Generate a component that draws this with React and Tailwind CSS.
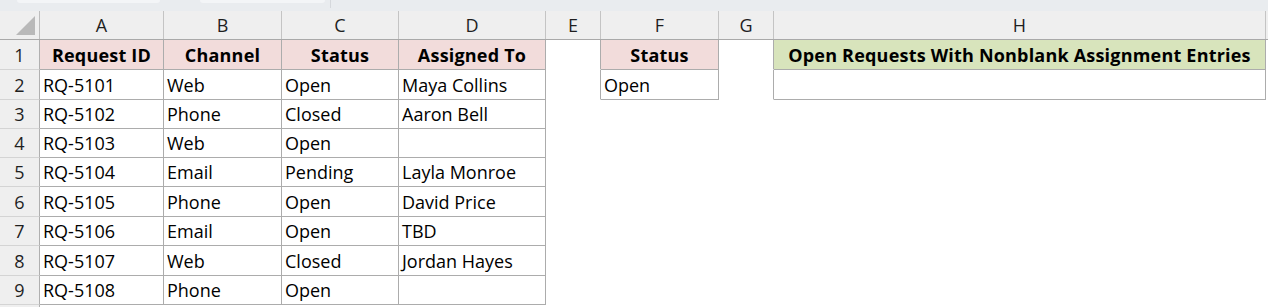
import React from "react";

const COLS = [
  { key: "A", w: "w-[124px]" },
  { key: "B", w: "w-[118px]" },
  { key: "C", w: "w-[117px]" },
  { key: "D", w: "w-[147px]" },
  { key: "E", w: "w-[55px]" },
  { key: "F", w: "w-[118px]" },
  { key: "G", w: "w-[55px]" },
  { key: "H", w: "w-[492px]" },
];

const ROW_H = ["h-[30px]", "h-[30px]", "h-[29px]", "h-[29px]", "h-[29px]", "h-[30px]", "h-[29px]", "h-[30px]", "h-[29px]"];

const DATA = [
  ["Request ID", "Channel", "Status", "Assigned To", "", "Status", "", "Open Requests With Nonblank Assignment Entries"],
  ["RQ-5101", "Web", "Open", "Maya Collins", "", "Open", "", ""],
  ["RQ-5102", "Phone", "Closed", "Aaron Bell", "", "", "", ""],
  ["RQ-5103", "Web", "Open", "", "", "", "", ""],
  ["RQ-5104", "Email", "Pending", "Layla Monroe", "", "", "", ""],
  ["RQ-5105", "Phone", "Open", "David Price", "", "", "", ""],
  ["RQ-5106", "Email", "Open", "TBD", "", "", "", ""],
  ["RQ-5107", "Web", "Closed", "Jordan Hayes", "", "", "", ""],
  ["RQ-5108", "Phone", "Open", "", "", "", "", ""],
];

function boxed(r, c) {
  if (r < 0 || r > 8 || c < 0 || c > 7) return false;
  if (c <= 3) return true;
  if ((c === 5 || c === 7) && r <= 1) return true;
  return false;
}

function Cell({ r, c }) {
  const col = COLS[c];
  const text = DATA[r][c];
  const right = boxed(r, c) || boxed(r, c + 1);
  const bottom = boxed(r, c) || boxed(r + 1, c);
  const isHead = r === 0 && boxed(r, c);
  let bg = "bg-white";
  if (isHead) bg = c === 7 ? "bg-[#d8e4bc]" : "bg-[#f2dcdb]";
  return (
    <div
      className={[
        col.w,
        "shrink-0 h-full flex items-center overflow-hidden whitespace-nowrap",
        bg,
        right ? "border-r border-r-[#acacac]" : "border-r border-r-transparent",
        bottom ? "border-b border-b-[#acacac]" : "border-b border-b-transparent",
        isHead ? "justify-center font-bold tracking-[0.2px]" : "justify-start pl-[3px]",
      ].join(" ")}
    >
      {text}
    </div>
  );
}

export default function App() {
  return (
    <div className="w-[1268px] h-[307px] overflow-hidden bg-white text-[18px] text-black leading-none" style={{ fontFamily: "'Open Sans', Lato, sans-serif" }}>
      {/* top strip */}
      <div className="h-[11px] bg-[#e9ecef] flex items-start relative">
        <div className="ml-[17px] w-[143px] h-[3px] bg-[#f3f5f7] rounded-b-[3px]" />
        <div className="ml-[40px] w-[125px] h-[3px] bg-[#f3f5f7] rounded-b-[3px]" />
        <div className="ml-[5px] w-px h-[8px] bg-[#d5d8dc]" />
      </div>
      {/* column header */}
      <div className="h-[29px] flex bg-[#efefef] border-b border-b-[#a9a9a9] text-[#1f1f1f] text-[18px]">
        <div className="w-[40px] shrink-0 h-full border-r border-r-[#bdbdbd] relative">
          <svg className="absolute left-[16px] top-[5px]" width="19" height="19" viewBox="0 0 19 19">
            <polygon points="19,0 19,19 0,19" fill="#b9b9b9" />
          </svg>
        </div>
        {COLS.map((c) => (
          <div key={c.key} className={`${c.w} shrink-0 h-full flex items-center justify-center border-r border-r-[#c4c4c4]`}>
            {c.key}
          </div>
        ))}
        <div className="flex-1" />
      </div>
      {DATA.map((row, r) => (
        <div key={r} className={`${ROW_H[r]} flex`}>
          <div className="w-[40px] shrink-0 h-full flex items-center justify-center bg-[#efefef] border-r border-r-[#b0b0b0] border-b border-b-[#d4d4d4] text-[#1f1f1f] text-[18px]">
            {r + 1}
          </div>
          {row.map((_, c) => (
            <Cell key={c} r={r} c={c} />
          ))}
          <div className="flex-1 h-full" />
        </div>
      ))}
      <div className="h-[10px] flex">
        <div className="w-[40px] shrink-0 h-full bg-[#efefef] border-r border-r-[#b0b0b0]" />
      </div>
    </div>
  );
}
